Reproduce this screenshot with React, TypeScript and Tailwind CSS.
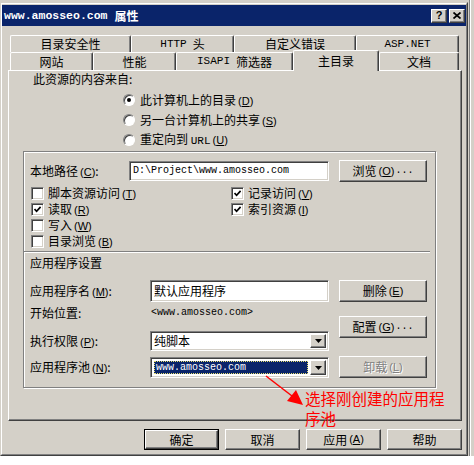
import React from "react";

const RAISED =
  "bg-[#d4d0c8] border-t border-l border-r border-b border-t-white border-l-white border-r-[#404040] border-b-[#404040] shadow-[inset_-1px_-1px_0_#808080]";
const SUNKEN =
  "bg-white border-t border-l border-r border-b border-t-[#808080] border-l-[#808080] border-r-white border-b-white shadow-[inset_1px_1px_0_#404040,inset_-1px_-1px_0_#d4d0c8]";

function M({ k }: { k: string }) {
  return (
    <span className="font-['Liberation_Sans',sans-serif] text-[11px] ml-[2px]">
      (<span className="underline underline-offset-[1px]">{k}</span>)
    </span>
  );
}

function Mono({ children, cls = "" }: { children: React.ReactNode; cls?: string }) {
  return <span className={`font-['Liberation_Mono',monospace] ${cls}`}>{children}</span>;
}

function Tab({ cls, children }: { cls: string; children: React.ReactNode }) {
  return (
    <div
      className={`${cls} h-full flex items-center justify-center bg-[#d4d0c8] border-t border-l border-r border-t-white border-l-white border-r-[#404040] rounded-tl-[2px] rounded-tr-[2px] shadow-[inset_-1px_0_0_#808080]`}
    >
      {children}
    </div>
  );
}

function Btn({
  cls,
  children,
  disabled,
}: {
  cls: string;
  children: React.ReactNode;
  disabled?: boolean;
}) {
  return (
    <div
      className={`${cls} ${RAISED} flex items-center justify-center ${
        disabled ? "text-[#808080] [text-shadow:1px_1px_0_#fff]" : "text-black"
      }`}
    >
      {children}
    </div>
  );
}

function Check({ checked }: { checked?: boolean }) {
  return (
    <div className={`w-[13px] h-[13px] shrink-0 ${SUNKEN} flex items-center justify-center`}>
      {checked && (
        <svg width="7" height="7" viewBox="0 0 7 7">
          <path d="M0.5 3 L2.6 5.3 L6.6 0.8" stroke="#000" strokeWidth="1.7" fill="none" />
        </svg>
      )}
    </div>
  );
}

function Radio({ checked }: { checked?: boolean }) {
  return (
    <div className="w-[12px] h-[12px] shrink-0 rounded-full bg-white border border-t-[#808080] border-l-[#808080] border-r-white border-b-white shadow-[inset_1px_1px_0_#404040] flex items-center justify-center">
      {checked && <div className="w-[4px] h-[4px] rounded-full bg-black" />}
    </div>
  );
}

function Arrow() {
  return (
    <div className={`w-[16px] shrink-0 ${RAISED} flex items-center justify-center`}>
      <svg width="7" height="4" viewBox="0 0 7 4">
        <polygon points="0,0 7,0 3.5,4" fill="#000" />
      </svg>
    </div>
  );
}

export default function App() {
  return (
    <div className="w-[474px] h-[465px] relative overflow-hidden bg-[#d4d0c8] flex flex-col font-['Noto_Sans_CJK_SC','Noto_Sans_CJK_JP',sans-serif] text-[12px] leading-none text-black">
      <div className="flex h-[456px] shrink-0">
        {/* Dialog */}
        <div className="w-[468px] h-[454px] mt-[2px] flex flex-col border-t border-l border-r border-b border-t-[#d4d0c8] border-l-[#d4d0c8] border-r-[#404040] border-b-[#404040]">
          <div className="flex-1 flex flex-col border-t border-l border-r border-b border-t-white border-l-white border-r-[#808080] border-b-[#808080] pt-[1px]">
            {/* Title bar */}
            <div className="h-[21px] shrink-0 bg-[#0a246a] flex items-center pl-[2px] pr-[1px]">
              <Mono cls="font-bold text-[11.5px] text-white">www.amosseo.com</Mono>
              <span className="ml-[7px] font-bold text-white text-[12px]">属性</span>
              <div className="ml-auto flex gap-[2px]">
                <div className={`${RAISED} w-[16px] h-[14px] flex items-center justify-center font-['Liberation_Sans',sans-serif] font-bold text-[11px]`}>
                  ?
                </div>
                <div className={`${RAISED} w-[16px] h-[14px] flex items-center justify-center`}>
                  <svg width="8" height="7" viewBox="0 0 8 7">
                    <path d="M0.5 0.5 L7.5 6.5 M7.5 0.5 L0.5 6.5" stroke="#000" strokeWidth="1.7" />
                  </svg>
                </div>
              </div>
            </div>

            {/* Body */}
            <div className="flex-1 flex flex-col pl-[6px] pr-[4px] pt-[9px]">
              {/* Tabs */}
              <div className="flex ml-[2px] h-[17px] shrink-0">
                <Tab cls="w-[121px]">目录安全性</Tab>
                <Tab cls="w-[103px]">
                  <Mono cls="text-[11px]">HTTP</Mono>
                  <span className="ml-[6px]">头</span>
                </Tab>
                <Tab cls="w-[122px]">自定义错误</Tab>
                <Tab cls="w-[103px]">
                  <Mono cls="text-[11px]">ASP.NET</Mono>
                </Tab>
              </div>
              <div className="flex ml-[2px] h-[18px] shrink-0">
                <Tab cls="w-[83px]">网站</Tab>
                <Tab cls="w-[83px]">性能</Tab>
                <Tab cls="w-[117px]">
                  <Mono cls="text-[11px]">ISAPI</Mono>
                  <span className="ml-[6px]">筛选器</span>
                </Tab>
                <div className="w-[86px] h-[21px] -mt-[2px] relative z-10 bg-[#d4d0c8] border-t border-l border-r border-t-white border-l-white border-r-[#404040] rounded-tl-[2px] rounded-tr-[2px] shadow-[inset_-1px_0_0_#808080] flex justify-center pt-[4px]">
                  主目录
                </div>
                <Tab cls="w-[80px]">文档</Tab>
              </div>

              {/* Panel */}
              <div className="h-[351px] shrink-0 flex flex-col border-t border-l border-r border-b border-t-white border-l-white border-r-[#404040] border-b-[#404040] shadow-[inset_-1px_-1px_0_#808080]">
                <div className="h-[16px] pl-[24px] flex items-center">此资源的内容来自:</div>
                <div className="mt-[3px] flex flex-col pl-[114px]">
                  <div className="h-[20px] flex items-center gap-[5px]">
                    <Radio checked />
                    <span>
                      此计算机上的目录
                      <M k="D" />
                    </span>
                  </div>
                  <div className="h-[20px] flex items-center gap-[5px]">
                    <Radio />
                    <span>
                      另一台计算机上的共享
                      <M k="S" />
                    </span>
                  </div>
                  <div className="h-[20px] flex items-center gap-[5px]">
                    <Radio />
                    <span>
                      重定向到 <Mono cls="text-[11px]">URL</Mono>
                      <M k="U" />
                    </span>
                  </div>
                </div>

                {/* Group box */}
                <div className="mt-[1px] ml-[14px] w-[413px] h-[237px] border border-[#808080] shadow-[inset_1px_1px_0_#fff,1px_1px_0_#fff] flex flex-col">
                  <div className="mt-[7px] h-[24px] flex items-center pl-[6px]">
                    <div className="w-[99px]">
                      本地路径
                      <M k="C" />:
                    </div>
                    <div className={`w-[200px] h-[20px] ${SUNKEN} flex items-center pl-[3px]`}>
                      <Mono cls="text-[10px]">D:\Project\www.amosseo.com</Mono>
                    </div>
                    <Btn cls="ml-[10px] w-[88px] h-[22px]">
                      浏览
                      <M k="O" />
                      <Mono cls="text-[10px] ml-[1px]">...</Mono>
                    </Btn>
                  </div>

                  <div className="mt-[2px] pl-[7px] grid grid-cols-[200px_1fr]">
                    <div className="h-[16px] flex items-center gap-[4px]">
                      <Check />
                      <span>
                        脚本资源访问
                        <M k="T" />
                      </span>
                    </div>
                    <div className="h-[16px] flex items-center gap-[4px]">
                      <Check checked />
                      <span>
                        记录访问
                        <M k="V" />
                      </span>
                    </div>
                    <div className="h-[16px] flex items-center gap-[4px]">
                      <Check checked />
                      <span>
                        读取
                        <M k="R" />
                      </span>
                    </div>
                    <div className="h-[16px] flex items-center gap-[4px]">
                      <Check checked />
                      <span>
                        索引资源
                        <M k="I" />
                      </span>
                    </div>
                    <div className="h-[16px] flex items-center gap-[4px]">
                      <Check />
                      <span>
                        写入
                        <M k="W" />
                      </span>
                    </div>
                    <div className="h-[16px]" />
                    <div className="h-[16px] flex items-center gap-[4px]">
                      <Check />
                      <span>
                        目录浏览
                        <M k="B" />
                      </span>
                    </div>
                    <div className="h-[16px]" />
                  </div>

                  <div className="mt-[2px] mr-[5px] h-[2px] border-t border-t-[#808080] border-b border-b-white" />

                  <div className="mt-[4px] h-[12px] pl-[6px] flex items-center">应用程序设置</div>

                  <div className="mt-[11px] flex pl-[6px]">
                    <div className="w-[299px] flex flex-col">
                      <div className="h-[22px] flex items-center">
                        <div className="w-[120px]">
                          应用程序名
                          <M k="M" />:
                        </div>
                        <div className={`w-[179px] h-[22px] ${SUNKEN} flex items-center pl-[3px]`}>默认应用程序</div>
                      </div>
                      <div className="h-[22px] flex items-center">
                        <div className="w-[120px]">开始位置:</div>
                        <Mono cls="text-[10px] pl-[1px]">&lt;www.amosseo.com&gt;</Mono>
                      </div>
                      <div className="mt-[7px] h-[20px] flex items-center">
                        <div className="w-[120px]">
                          执行权限
                          <M k="P" />:
                        </div>
                        <div className={`w-[179px] h-[20px] ${SUNKEN} flex p-[2px]`}>
                          <div className="flex-1 flex items-center pl-[1px]">纯脚本</div>
                          <Arrow />
                        </div>
                      </div>
                      <div className="mt-[6px] h-[21px] flex items-center">
                        <div className="w-[120px]">
                          应用程序池
                          <M k="N" />:
                        </div>
                        <div className={`w-[179px] h-[21px] ${SUNKEN} flex p-[2px]`}>
                          <div className="flex-1 flex p-[1px] pr-[2px]">
                            <div className="flex-1 bg-[#0a246a] border border-dotted border-[#e8e070] flex items-center pl-[1px]">
                              <Mono cls="text-[10px] text-white">www.amosseo.com</Mono>
                            </div>
                          </div>
                          <Arrow />
                        </div>
                      </div>
                    </div>
                    <div className="ml-[10px] w-[88px] flex flex-col">
                      <Btn cls="h-[22px]">
                        删除
                        <M k="E" />
                      </Btn>
                      <Btn cls="mt-[14px] h-[22px]">
                        配置
                        <M k="G" />
                        <Mono cls="text-[10px] ml-[1px]">...</Mono>
                      </Btn>
                      <Btn cls="mt-[18px] h-[22px]" disabled>
                        卸载
                        <M k="L" />
                      </Btn>
                    </div>
                  </div>
                </div>
              </div>

              {/* Bottom buttons */}
              <div className="mt-[8px] h-[21px] flex justify-end gap-[6px]">
                <div className="w-[75px] h-[21px] border border-black flex">
                  <Btn cls="flex-1">确定</Btn>
                </div>
                <Btn cls="w-[75px] h-[21px]">取消</Btn>
                <Btn cls="w-[75px] h-[21px]">
                  应用
                  <M k="A" />
                </Btn>
                <Btn cls="w-[75px] h-[21px]">帮助</Btn>
              </div>
            </div>
          </div>
        </div>
        {/* Window behind, right edge */}
        <div className="flex-1 flex pl-[1px]">
          <div className="w-[1px] bg-[#808080]" />
          <div className="w-[1px] bg-white" />
        </div>
      </div>
      {/* Page behind, bottom */}
      <div className="h-[9px] bg-white" />

      {/* Red annotation */}
      <div className="absolute inset-0 pointer-events-none">
        <svg className="absolute left-0 top-0" width="474" height="465" viewBox="0 0 474 465">
          <line x1="266" y1="376" x2="292" y2="396" stroke="#ff0000" strokeWidth="1.5" />
          <polygon points="303,405 287,401 296,390" fill="#ff0000" />
        </svg>
        <div className="absolute left-[305px] top-[388px] text-[#ff0000] text-[15.5px] leading-[20px] whitespace-nowrap">
          选择刚创建的应用程
          <br />
          序池
        </div>
      </div>
    </div>
  );
}
